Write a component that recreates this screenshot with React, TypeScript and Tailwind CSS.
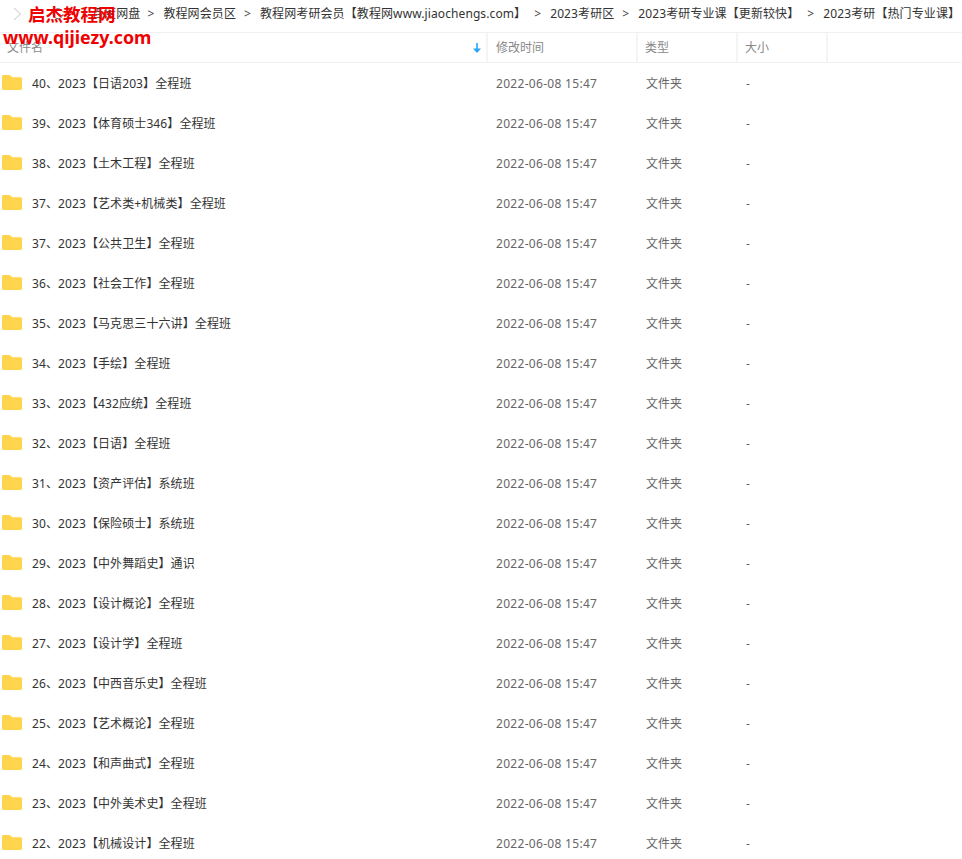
import React from 'react';

const rows = [
  '40、2023【日语203】全程班',
  '39、2023【体育硕士346】全程班',
  '38、2023【土木工程】全程班',
  '37、2023【艺术类+机械类】全程班',
  '37、2023【公共卫生】全程班',
  '36、2023【社会工作】全程班',
  '35、2023【马克思三十六讲】全程班',
  '34、2023【手绘】全程班',
  '33、2023【432应统】全程班',
  '32、2023【日语】全程班',
  '31、2023【资产评估】系统班',
  '30、2023【保险硕士】系统班',
  '29、2023【中外舞蹈史】通识',
  '28、2023【设计概论】全程班',
  '27、2023【设计学】全程班',
  '26、2023【中西音乐史】全程班',
  '25、2023【艺术概论】全程班',
  '24、2023【和声曲式】全程班',
  '23、2023【中外美术史】全程班',
  '22、2023【机械设计】全程班',
];

const crumbs = [
  '教程网会员区',
  '教程网考研会员【教程网www.jiaochengs.com】',
  '2023考研区',
  '2023考研专业课【更新较快】',
  '2023考研【热门专业课】',
];

const FolderIcon = () => (
  <svg width="20" height="15" viewBox="0 0 20 15" className="mb-[1px] shrink-0">
    <path d="M1.500 0h5.700c.5 0 .9.200 1.200.500L10.300 2.200H18.500c.8 0 1.500.7 1.500 1.500v9.800c0 .8-.7 1.500-1.500 1.500h-17C.7 15 0 14.300 0 13.500v-12C0 .7.700 0 1.500 0z" fill="#ffd54d" />
  </svg>
);

export default function App() {
  return (
    <div className="relative h-[859px] w-[962px] overflow-hidden bg-white text-[12px] font-['Noto_Sans','Noto_Sans_CJK_SC',sans-serif] text-[#424e67]">
      {/* breadcrumb */}
      <div className="flex h-[32px] items-center whitespace-nowrap pb-[5px] pl-[13px] tracking-[0.1px] text-[#333]">
        <svg width="9" height="14" viewBox="0 0 9 14" className="shrink-0">
          <path d="M1 1l6.500 6L1 13" fill="none" stroke="#c4c4c4" strokeWidth="1" />
        </svg>
        <svg width="12" height="12" viewBox="0 0 12 12" className="ml-[30px] shrink-0">
          <path d="M10.500 3.500A5 5 0 1 0 11 6" fill="none" stroke="#666" strokeWidth="1" />
        </svg>
        <span className="ml-[28px]">百度网盘</span>
        {crumbs.map((c, i) => (
          <React.Fragment key={c}>
            <span className={i === 0 ? 'ml-[7px] w-[16px] text-left text-[#444]' : 'ml-[8px] w-[16px] text-left text-[#444]'}>&gt;</span>
            <span>{c}</span>
          </React.Fragment>
        ))}
      </div>

      {/* table head */}
      <div className="flex h-[31px] items-center border-y border-[#f0f0f3] text-[#888]">
        <div className="flex h-full w-[488px] items-center justify-between border-r-2 border-[#f4f4f6] pl-[7px] pr-[5px]">
          <span>文件名</span>
          <svg width="8" height="10" viewBox="0 0 8 10">
            <path d="M3.200 0h1.600v5.500H8L4 10 0 5.500h3.200z" fill="#2aa5f5" />
          </svg>
        </div>
        <div className="flex h-full w-[150px] items-center border-r-2 border-[#f4f4f6] pl-[8px]">修改时间</div>
        <div className="flex h-full w-[100px] items-center border-r-2 border-[#f4f4f6] pl-[7px]">类型</div>
        <div className="flex h-full w-[90px] items-center border-r-2 border-[#f4f4f6] pl-[7px]">大小</div>
      </div>

      {/* rows */}
      <div>
        {rows.map((name) => (
          <div key={name} className="flex h-[40px] items-center">
            <div className="flex w-[488px] items-center gap-[10px] pl-[2px] text-[#333]">
              <FolderIcon />
              <span className="pt-[2px] tracking-[0.1px]">{name}</span>
            </div>
            <div className="w-[150px] pl-[8px] pt-[2px] tracking-[0.3px] text-[#666]">2022-06-08 15:47</div>
            <div className="w-[100px] pl-[8px] pt-[2px] text-[#666]">文件夹</div>
            <div className="pl-[8px] pt-[2px] text-[#666]">-</div>
          </div>
        ))}
      </div>

      {/* watermark */}
      <div className="absolute left-[28px] top-[2px] text-[17.500px] font-bold leading-[24px] text-[#f00000]">启杰教程网</div>
      <div className="absolute left-[3px] top-[25px] text-[17.800px] font-bold leading-[24px] text-[#f00000]">www.qijiezy.com</div>
    </div>
  );
}
